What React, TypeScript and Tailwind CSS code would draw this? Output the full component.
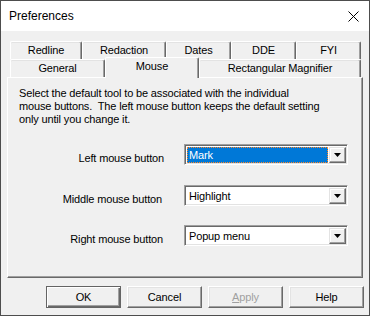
import React from "react";

const font = { fontFamily: '"Liberation Sans", Arial, sans-serif' };

function Tab({ label, w, selected }: { label: string; w: string; selected?: boolean }) {
	if (selected) {
		return (
			<div className={`${w} relative z-10 -mt-[2px] h-[21px] flex justify-center pt-[2px] bg-[#f0f0f0] border-t border-l border-white border-r border-r-[#696969] rounded-t-[2px] shadow-[inset_-1px_0_0_#a0a0a0]`}>
				{label}
			</div>
		);
	}
	return (
		<div className={`${w} h-full flex items-center justify-center bg-[#f0f0f0] border-t border-l border-white border-r border-r-[#696969] rounded-t-[2px] shadow-[inset_-1px_0_0_#a0a0a0,inset_0_1px_0_#e3e3e3]`}>
			{label}
		</div>
	);
}

function Combo({ value, focused }: { value: string; focused?: boolean }) {
	return (
		<div className="w-[164px] h-[21px] flex border-t border-l border-t-[#a0a0a0] border-l-[#a0a0a0] border-b border-r border-white shadow-[inset_1px_1px_0_#696969,inset_-1px_-1px_0_#e3e3e3] bg-white p-[2px] pr-[1px] pb-[1px]">
			<div className="flex-1 flex items-center">
				{focused ? (
					<div className="w-full h-[16px] bg-[#0078d7] text-white border border-dotted border-[#ff8728] flex items-center pl-[1px]">
						{value}
					</div>
				) : (
					<div className="pl-[2px]">{value}</div>
				)}
			</div>
			<div className="w-[17px] h-[16px] ml-[1px] bg-[#f0f0f0] border-t border-l border-[#e3e3e3] border-r border-b border-r-[#696969] border-b-[#696969] shadow-[inset_-1px_-1px_0_#a0a0a0,inset_1px_1px_0_#ffffff] flex items-center justify-center">
				<svg width="7" height="4" viewBox="0 0 7 4">
					<polygon points="0,0 7,0 3.5,4" fill="#000" />
				</svg>
			</div>
		</div>
	);
}

function Btn({ children, isDefault, disabled }: { children: React.ReactNode; isDefault?: boolean; disabled?: boolean }) {
	return (
		<div
			className={`w-[75px] h-[22px] flex items-center justify-center bg-[#f0f0f0] ${
				isDefault
					? "border border-[#646464] shadow-[inset_1px_1px_0_#ffffff,inset_-1px_-1px_0_#696969,inset_-2px_-2px_0_#a0a0a0]"
					: "border-t border-l border-white border-r border-b border-r-[#696969] border-b-[#696969] shadow-[inset_-1px_-1px_0_#a0a0a0,inset_1px_1px_0_#e3e3e3]"
			} ${disabled ? "text-[#a0a0a0]" : "text-black"}`}
		>
			{children}
		</div>
	);
}

export default function App() {
	return (
		<div style={font} className="w-[370px] h-[316px] border border-[#4d4d4d] bg-[#f0f0f0] flex flex-col text-[11px] leading-[13px] tracking-[-0.15px] text-black">
			<div className="h-[30px] bg-white flex items-center justify-between pl-[8px] pr-[10px]">
				<span className="text-[12px] leading-[14px] tracking-normal">Preferences</span>
				<svg width="11" height="11" viewBox="0 0 11 11">
					<path d="M0.5 0.5 L10.5 10.5 M10.5 0.5 L0.5 10.5" stroke="#000" strokeWidth="1" />
				</svg>
			</div>

			<div className="mt-[10px] h-[18px] flex pl-[9px]">
				<Tab label="Redline" w="w-[72px]" />
				<Tab label="Redaction" w="w-[84px]" />
				<Tab label="Dates" w="w-[65px]" />
				<Tab label="DDE" w="w-[65px]" />
				<Tab label="FYI" w="w-[65px]" />
			</div>
			<div className="h-[18px] flex pl-[9px]">
				<Tab label="General" w="w-[95px]" />
				<Tab label="Mouse" w="w-[94px]" selected />
				<Tab label="Rectangular Magnifier" w="w-[162px]" />
			</div>

			<div className="ml-[6px] w-[356px] h-[201px] border-t border-l border-white border-r border-b border-r-[#696969] border-b-[#696969] shadow-[inset_-1px_-1px_0_#a0a0a0] pl-[11px] pt-[9px]">
				<p>
					Select the default tool to be associated with the individual
					<br />
					mouse buttons.&nbsp; The left mouse button keeps the default setting
					<br />
					only until you change it.
				</p>

				<div className="mt-[18px] flex flex-col">
					<div className="flex items-end gap-[19px]">
						<div className="w-[146px] text-right pr-[1px]">Left mouse button</div>
						<Combo value="Mark" focused />
					</div>
					<div className="mt-[20px] flex items-end gap-[19px]">
						<div className="w-[146px] text-right pr-[3px]">Middle mouse button</div>
						<Combo value="Highlight" />
					</div>
					<div className="mt-[19px] flex items-end gap-[19px]">
						<div className="w-[146px] text-right pr-[2px]">Right mouse button</div>
						<Combo value="Popup menu" />
					</div>
				</div>
			</div>

			<div className="mt-[8px] flex justify-end gap-[6px] pr-[5px]">
				<Btn isDefault>OK</Btn>
				<Btn>Cancel</Btn>
				<Btn disabled>
					<span>
						<span className="underline">A</span>pply
					</span>
				</Btn>
				<Btn>Help</Btn>
			</div>
		</div>
	);
}
